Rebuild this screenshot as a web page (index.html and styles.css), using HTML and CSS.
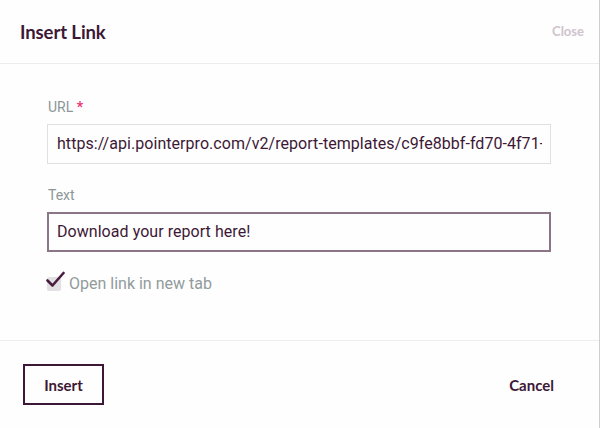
FILE: index.html
```html
<!DOCTYPE html>
<html>
<head>
<meta charset="utf-8">
<link rel="stylesheet" href="styles.css">
</head>
<body>
<div class="dialog">
  <div class="header">
    <h1 class="title">Insert Link</h1>
    <span class="close">Close</span>
  </div>
  <div class="body">
    <div class="label">URL <span class="req">*</span></div>
    <div class="input input-url"><span class="value">https://api.pointerpro.com/v2/report-templates/c9fe8bbf-fd70-4f71-8a3c-2d41</span></div>
    <div class="label label-text">Text</div>
    <div class="input input-active"><span class="value">Download your report here!</span></div>
    <div class="check-row">
      <span class="checkbox">
        <svg class="tick" width="20" height="18" viewBox="0 0 20 18"><path d="M1.5 9.5 L6.5 14.5 L17.5 2" fill="none" stroke="#4a1d40" stroke-width="2.6" stroke-linecap="round" stroke-linejoin="round"/></svg>
      </span>
      <span class="check-label">Open link in new tab</span>
    </div>
  </div>
  <div class="footer">
    <button class="btn-insert">Insert</button>
    <span class="cancel">Cancel</span>
  </div>
</div>
</body>
</html>
```
FILE: styles.css
```css
html, body {
  margin: 0;
  padding: 0;
  background: #fefefe;
}
.dialog {
  width: 599px;
  height: 428px;
  border-right: 1px solid #cfcfcf;
  display: flex;
  flex-direction: column;
  background: #fefefe;
}
.header {
  height: 63px;
  border-bottom: 1px solid #ececec;
  display: flex;
  align-items: center;
  justify-content: space-between;
  padding: 0 15px 0 20px;
}
.title {
  margin: 0;
  font-family: "Lato", sans-serif;
  font-weight: 700;
  font-size: 18.5px;
  color: #3d1836;
  letter-spacing: -0.1px;
}
.close {
  font-family: "Lato", sans-serif;
  font-weight: 700;
  font-size: 13px;
  color: #cfc3cc;
  margin-top: -2px;
}
.body {
  flex: 1;
  padding: 35px 47px 0 47px;
  font-family: "Roboto", sans-serif;
}
.label {
  font-size: 14px;
  line-height: 17px;
  color: #8d9697;
  padding-left: 1px;
  margin-bottom: 8px;
}
.req {
  color: #ee3572;
  font-weight: 700;
}
.label-text {
  margin-top: 23px;
}
.input {
  height: 40px;
  box-sizing: border-box;
  border: 1px solid #e0e0e0;
  padding: 0 8px 0 9px;
  font-size: 16px;
  line-height: 38px;
  color: #3d1836;
  width: 504px;
}
.value {
  display: block;
  white-space: nowrap;
  overflow: hidden;
  letter-spacing: 0.05px;
}
.input-active {
  border: 2px solid #8b7587;
  line-height: 36px;
  padding: 0 8px;
}
.check-row {
  display: flex;
  align-items: center;
  margin-top: 22px;
}
.checkbox {
  position: relative;
  width: 14px;
  height: 14px;
  border-radius: 2px;
  background: #e2e0e2;
  margin-right: 8px;
}
.tick {
  position: absolute;
  left: -1px;
  top: -6px;
}
.check-label {
  font-size: 16px;
  color: #929b9c;
}
.footer {
  height: 87px;
  border-top: 1px solid #eeeeee;
  display: flex;
  align-items: center;
  justify-content: space-between;
  padding: 0 45px 0 23px;
}
.btn-insert {
  width: 81px;
  height: 41px;
  background: #fefefe;
  border: 2px solid #3d1836;
  font-family: "Lato", sans-serif;
  font-weight: 700;
  font-size: 15px;
  color: #3d1836;
  padding: 0;
}
.cancel {
  font-family: "Lato", sans-serif;
  font-weight: 700;
  font-size: 15px;
  color: #3d1836;
}
```
